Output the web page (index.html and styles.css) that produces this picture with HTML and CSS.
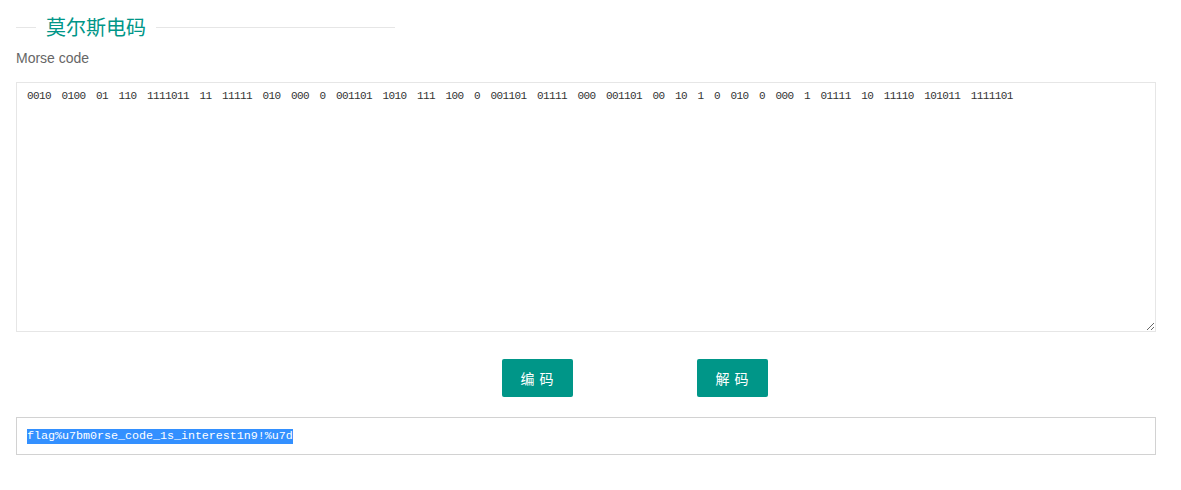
FILE: index.html
```html
<!DOCTYPE html>
<html lang="zh-CN">
<head>
<meta charset="utf-8">
<title>莫尔斯电码</title>
<link rel="stylesheet" href="styles.css">
</head>
<body>
<div class="page">
  <div class="field-title"><span class="field-title-text">莫尔斯电码</span></div>
  <label class="field-label" for="morse">Morse code</label>
  <textarea id="morse" class="morse-input" spellcheck="false">0010 0100 01 110 1111011 11 11111 010 000 0 001101 1010 111 100 0 001101 01111 000 001101 00 10 1 0 010 0 000 1 01111 10 11110 101011 1111101</textarea>
  <div class="actions">
    <button class="btn" type="button">编 码</button>
    <button class="btn" type="button">解 码</button>
  </div>
  <div class="output"><span class="output-text">flag%u7bm0rse_code_1s_interest1n9!%u7d</span></div>
</div>
</body>
</html>
```
FILE: styles.css
```css
html, body {
  margin: 0;
  padding: 0;
  background: #fff;
}
body {
  font-family: "Liberation Sans", "Noto Sans CJK SC", sans-serif;
  color: #333;
}
.page {
  padding: 13px 25px 0 16px;
}
.field-title {
  display: flex;
  align-items: center;
  width: 379px;
  height: 28px;
}
.field-title::before,
.field-title::after {
  content: "";
  height: 1px;
  background: #e6e6e6;
}
.field-title::before {
  width: 20px;
}
.field-title::after {
  flex: 1;
}
.field-title-text {
  padding: 0 10px;
  font-family: "Noto Sans CJK SC", sans-serif;
  font-size: 20px;
  font-weight: 400;
  line-height: 28px;
  color: #009688;
}
.field-label {
  display: block;
  margin-top: 7px;
  font-size: 14px;
  line-height: 20px;
  color: #666;
}
.morse-input {
  display: block;
  box-sizing: border-box;
  width: 100%;
  height: 250px;
  margin: 14px 0 0;
  padding: 6px 10px;
  border: 1px solid #e6e6e6;
  border-radius: 0;
  outline: none;
  font-family: "Liberation Mono", monospace;
  font-size: 11px;
  letter-spacing: -0.6px;
  line-height: 14px;
  word-spacing: 4.5px;
  color: #333;
  background: #fff;
}
.actions {
  display: flex;
  gap: 124px;
  margin-top: 27px;
  padding-left: 486px;
}
.btn {
  box-sizing: border-box;
  width: 71px;
  height: 38px;
  padding: 0;
  border: none;
  border-radius: 2px;
  background: #009688;
  color: #fff;
  font-family: "Noto Sans CJK SC", sans-serif;
  font-size: 14px;
  letter-spacing: 1px;
  cursor: pointer;
}
.output {
  box-sizing: border-box;
  height: 38px;
  margin-top: 20px;
  padding: 0 10px;
  border: 1px solid #d2d2d2;
  display: flex;
  align-items: center;
}
.output-text {
  font-family: "Liberation Mono", monospace;
  font-size: 11.67px;
  line-height: 15px;
  color: #fff;
  background: #3390ff;
}
```
